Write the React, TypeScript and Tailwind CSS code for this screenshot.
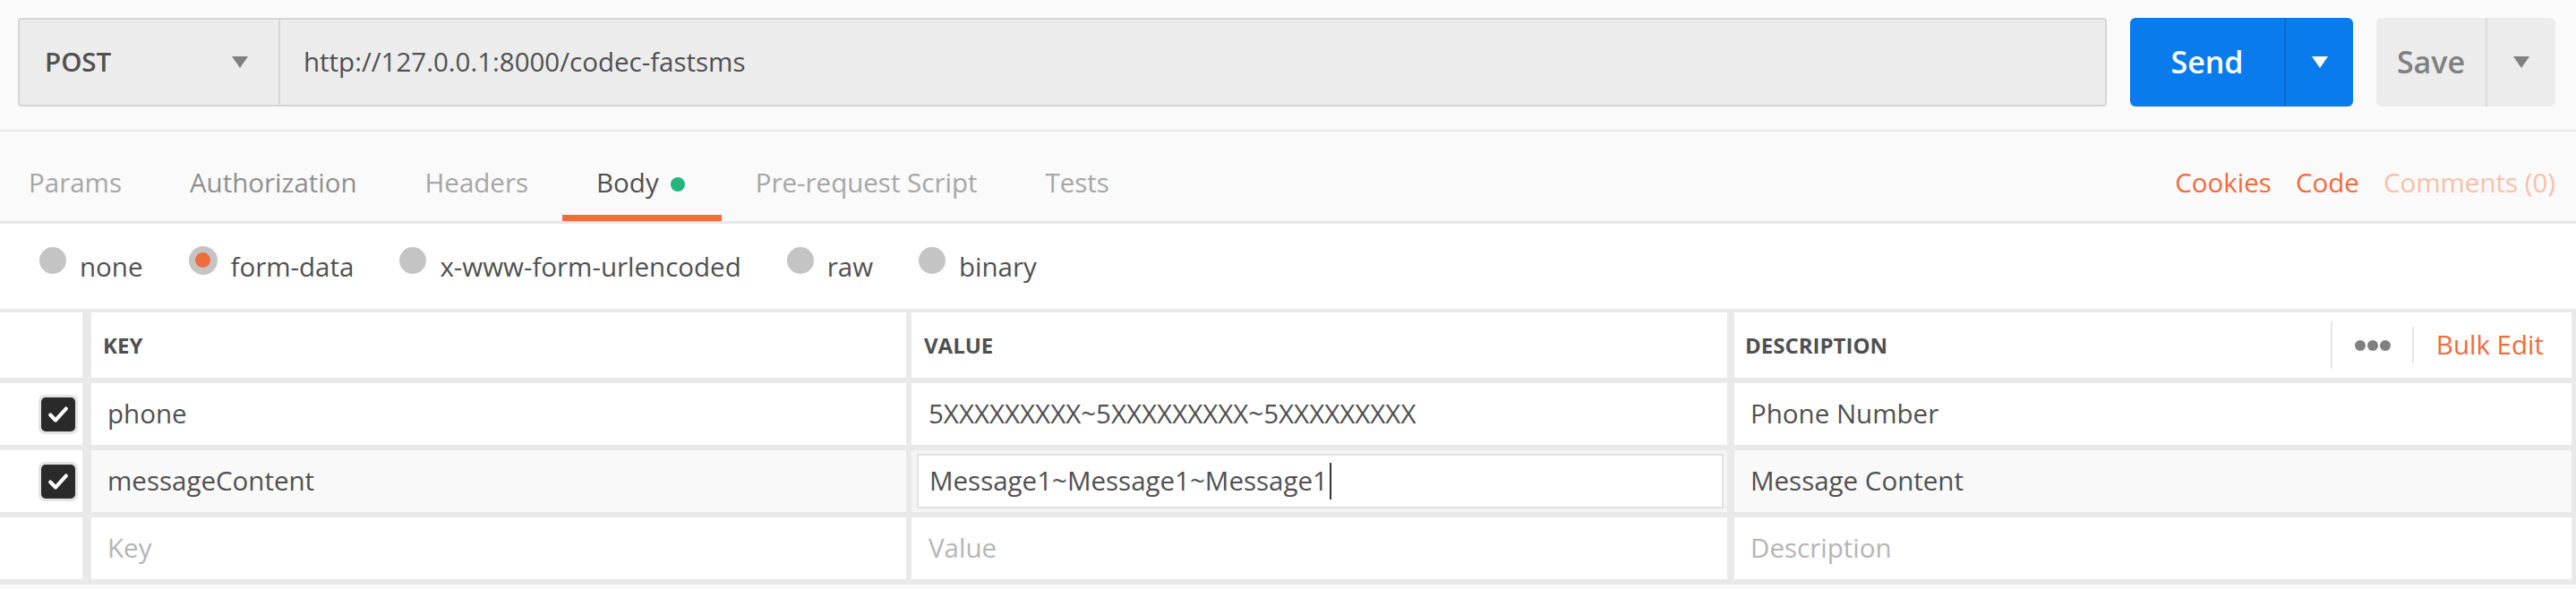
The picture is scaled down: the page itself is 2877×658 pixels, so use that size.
import React from 'react';

const font = "font-['Open_Sans',sans-serif]";

function Caret({ className }: { className: string }) {
  return (
    <svg width="18" height="13" viewBox="0 0 18 13" className={className}>
      <polygon points="0,0 18,0 9,13" fill="currentColor" />
    </svg>
  );
}

function Check() {
  return (
    <div className="w-[44px] h-[44px] rounded-[7px] bg-[#e4e4e4] p-[3px]">
      <div className="w-full h-full rounded-[5px] bg-[#2a2a2a] flex items-center justify-center">
        <svg width="28" height="28" viewBox="0 0 24 24">
          <path d="M4.5 12.5 L9.5 17.5 L19.5 6.5" fill="none" stroke="#fff" strokeWidth="3.6" strokeLinecap="round" strokeLinejoin="round" />
        </svg>
      </div>
    </div>
  );
}

function Radio({ label, selected }: { label: string; selected?: boolean }) {
  return (
    <div className="flex items-center gap-[15px]">
      {selected ? (
        <div className="w-[32px] h-[32px] mb-[16px] rounded-full bg-[#c4c4c4] flex items-center justify-center">
          <div className="w-[17px] h-[17px] rounded-full bg-[#f26b3a]" />
        </div>
      ) : (
        <div className="w-[30px] h-[30px] mb-[16px] rounded-full bg-[#c4c4c4]" />
      )}
      <span className="text-[29.5px] text-[#505050]">{label}</span>
    </div>
  );
}

const tabs = [
  { name: 'Params', color: 'text-[#a6a6a6]' },
  { name: 'Authorization', color: 'text-[#8f8f8f]' },
  { name: 'Headers', color: 'text-[#a6a6a6]' },
  { name: 'Body', color: 'text-[#505050]', active: true },
  { name: 'Pre-request Script', color: 'text-[#a6a6a6]' },
  { name: 'Tests', color: 'text-[#a6a6a6]' },
];

const rows = [
  { key: 'phone', value: '5XXXXXXXXX~5XXXXXXXXX~5XXXXXXXXX', desc: 'Phone Number' },
  { key: 'messageContent', value: 'Message1~Message1~Message1', desc: 'Message Content', editing: true },
];

export default function App() {
  return (
    <div className={`w-[2877px] h-[658px] bg-[#fafafa] overflow-hidden ${font}`}>
      {/* Request bar */}
      <div className="h-[147px] pt-[20px] pl-[20px] border-b-2 border-[#e8e8e8] flex items-start">
        <div className="w-[2333px] h-[99px] flex bg-[#ececec] border-2 border-[#d6d6d6] rounded-[4px]">
          <div className="w-[291px] flex items-center justify-between pl-[28px] pr-[34px] border-r-2 border-[#d6d6d6]">
            <span className="text-[29.5px] font-semibold text-[#505050]">POST</span>
            <Caret className="text-[#808080]" />
          </div>
          <div className="flex items-center pl-[26px] text-[29.5px] text-[#505050]">
            http://127.0.0.1:8000/codec-fastsms
          </div>
        </div>
        <div className="ml-[26px] w-[249px] h-[99px] flex rounded-[6px] bg-[#097bed]">
          <div className="w-[174px] flex items-center justify-center border-r-2 border-[#0a6bd0]">
            <span className="text-[34px] font-semibold text-white">Send</span>
          </div>
          <div className="flex-1 flex items-center justify-center">
            <Caret className="text-white" />
          </div>
        </div>
        <div className="ml-[26px] w-[200px] h-[99px] flex rounded-[6px] bg-[#ececec]">
          <div className="w-[124px] flex items-center justify-center border-r-2 border-[#dadada]">
            <span className="text-[34px] font-semibold text-[#808080]">Save</span>
          </div>
          <div className="flex-1 flex items-center justify-center">
            <Caret className="text-[#808080]" />
          </div>
        </div>
      </div>

      {/* Tabs */}
      <div className="h-[103px] flex items-stretch border-b-[3px] border-[#e8e8e8] pl-[32px] pr-[23px]">
        {tabs.map((t, i) => (
          <div
            key={t.name}
            className={`flex items-center pt-[22px] border-b-[7px] ${i === 0 ? 'pl-0' : 'pl-[38px]'} pr-[38px] ${
              t.active ? 'border-[#f26b3a] pr-[41px]' : 'border-transparent'
            }`}
          >
            <span className={`text-[29.5px] ${t.color}`}>{t.name}</span>
            {t.active && <span className="ml-[13px] mt-[2px] w-[16px] h-[16px] rounded-full bg-[#24b47e]" />}
          </div>
        ))}
        <div className="ml-auto flex items-center pt-[22px] pb-[7px] gap-[27px] text-[29.5px]">
          <span className="text-[#f26b3a]">Cookies</span>
          <span className="text-[#f26b3a]">Code</span>
          <span className="text-[#f8c0aa]">Comments (0)</span>
        </div>
      </div>

      {/* Body types */}
      <div className="h-[95px] bg-white flex items-center pl-[44px] gap-[51px] pt-[2px]">
        <Radio label="none" />
        <Radio label="form-data" selected />
        <Radio label="x-www-form-urlencoded" />
        <Radio label="raw" />
        <Radio label="binary" />
      </div>

      {/* Params table */}
      <div className="bg-[#e9e9e9] pt-[4px] pb-[6px] flex flex-col gap-[6px] text-[29.5px]">
        <div className="h-[73px] flex">
          <div className="w-[92px] bg-white" />
          <div className="ml-[10px] w-[910px] bg-white flex items-center pl-[13px] text-[24px] font-bold text-[#505050]">KEY</div>
          <div className="ml-[6px] w-[911px] bg-white flex items-center pl-[14px] text-[24px] font-bold text-[#505050]">VALUE</div>
          <div className="ml-[8px] mr-[5px] flex-1 bg-white flex items-center pl-[12px] pr-[31px]">
            <span className="text-[24px] font-bold text-[#505050]">DESCRIPTION</span>
            <div className="ml-auto w-[2px] h-[53px] bg-[#e6e6e6]" />
            <div className="ml-[25px] flex gap-[2px]">
              <span className="w-[12px] h-[12px] rounded-full bg-[#808080]" />
              <span className="w-[12px] h-[12px] rounded-full bg-[#808080]" />
              <span className="w-[12px] h-[12px] rounded-full bg-[#808080]" />
            </div>
            <div className="ml-[24px] w-[2px] h-[41px] bg-[#e6e6e6]" />
            <span className="ml-[25px] text-[29.5px] text-[#f26b3a]">Bulk Edit</span>
          </div>
        </div>

        {rows.map(r => (
          <div key={r.key} className="h-[69px] flex text-[#505050]">
            <div className="w-[92px] bg-white flex items-center justify-end pr-[5px]">
              <Check />
            </div>
            <div className={`ml-[10px] w-[910px] flex items-center pl-[18px] ${r.editing ? 'bg-[#f9f9f9]' : 'bg-white'}`}>
              {r.key}
            </div>
            {r.editing ? (
              <div className="ml-[6px] w-[911px] bg-[#f4f4f4] pl-[6px] pr-[4px] py-[4px] flex">
                <div className="flex-1 bg-white border-2 border-[#e2e2e2] flex items-center pl-[12px]">
                  <span>{r.value}</span>
                  <span className="ml-[2px] w-[2px] h-[41px] bg-[#333]" />
                </div>
              </div>
            ) : (
              <div className="ml-[6px] w-[911px] bg-white flex items-center pl-[19px]">{r.value}</div>
            )}
            <div className={`ml-[8px] mr-[5px] flex-1 flex items-center pl-[18px] ${r.editing ? 'bg-[#f9f9f9]' : 'bg-white'}`}>
              {r.desc}
            </div>
          </div>
        ))}

        <div className="h-[69px] flex text-[#b5b5b5]">
          <div className="w-[92px] bg-white" />
          <div className="ml-[10px] w-[910px] bg-white flex items-center pl-[18px]">Key</div>
          <div className="ml-[6px] w-[911px] bg-white flex items-center pl-[19px]">Value</div>
          <div className="ml-[8px] mr-[5px] flex-1 bg-white flex items-center pl-[18px]">Description</div>
        </div>
      </div>
    </div>
  );
}
